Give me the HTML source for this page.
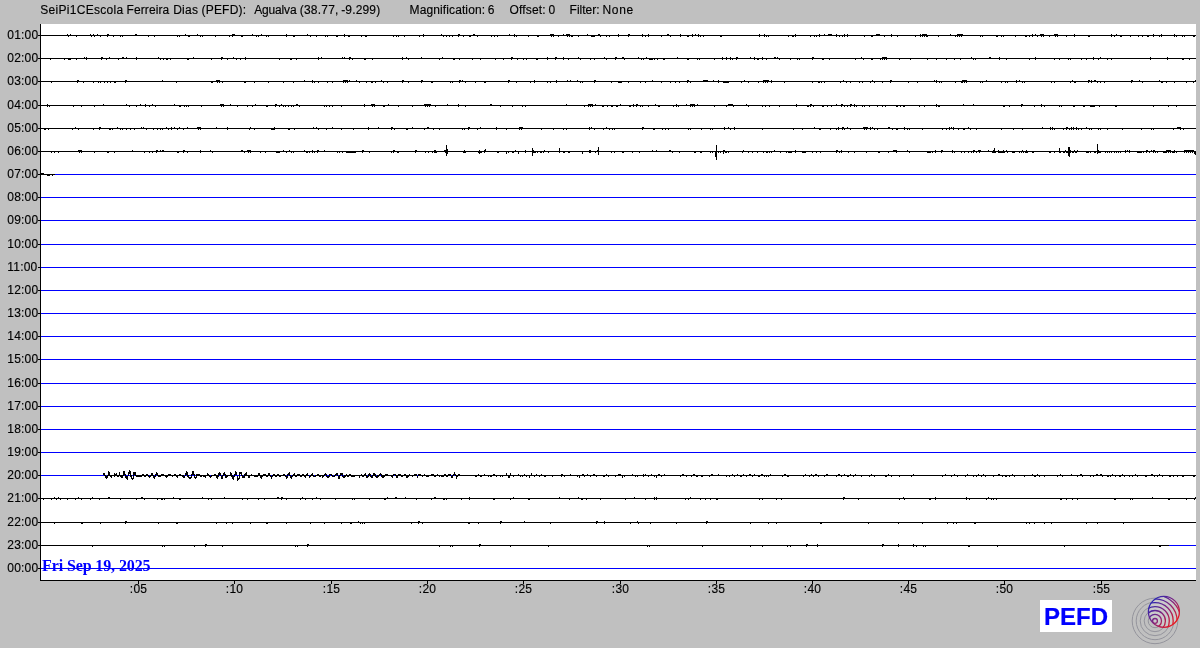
<!DOCTYPE html>
<html lang="en"><head><meta charset="utf-8"><title>SeiPi1C Escola Ferreira Dias (PEFD) helicorder</title>
<style>
html,body{margin:0;padding:0;background:#c0c0c0;}
body{width:1200px;height:648px;overflow:hidden;position:relative;font-family:"Liberation Sans",sans-serif;}
svg{position:absolute;left:0;top:0;display:block;}
text{font-family:"Liberation Sans",sans-serif;font-size:12px;fill:#000;stroke:#000;stroke-width:0.15px;}
text.date{font-family:"Liberation Serif",serif;font-weight:bold;font-size:16px;fill:#0000ff;stroke:none;}
text.sta{font-weight:bold;font-size:24px;fill:#0000ff;stroke:#0000ff;stroke-width:0.2px;}
</style></head><body>
<svg width="1200" height="648" viewBox="0 0 1200 648">
<rect x="0" y="0" width="1200" height="648" fill="#c0c0c0"/>
<rect x="40" y="24" width="1156" height="557" fill="#ffffff"/>
<g shape-rendering="crispEdges">
<rect x="40" y="35" width="1156" height="1" fill="#000000"/>
<rect x="38" y="35" width="2" height="1" fill="#000000"/>
<rect x="40" y="58" width="1156" height="1" fill="#000000"/>
<rect x="38" y="58" width="2" height="1" fill="#000000"/>
<rect x="40" y="81" width="1156" height="1" fill="#000000"/>
<rect x="38" y="81" width="2" height="1" fill="#000000"/>
<rect x="40" y="105" width="1156" height="1" fill="#000000"/>
<rect x="38" y="105" width="2" height="1" fill="#000000"/>
<rect x="40" y="128" width="1156" height="1" fill="#000000"/>
<rect x="38" y="128" width="2" height="1" fill="#000000"/>
<rect x="40" y="151" width="1156" height="1" fill="#000000"/>
<rect x="38" y="151" width="2" height="1" fill="#000000"/>
<rect x="40" y="174" width="15" height="1" fill="#000000"/>
<rect x="55" y="174" width="1141" height="1" fill="#0000ff"/>
<rect x="38" y="174" width="2" height="1" fill="#000000"/>
<rect x="40" y="197" width="1156" height="1" fill="#0000ff"/>
<rect x="38" y="197" width="2" height="1" fill="#000000"/>
<rect x="40" y="220" width="1156" height="1" fill="#0000ff"/>
<rect x="38" y="220" width="2" height="1" fill="#000000"/>
<rect x="40" y="244" width="1156" height="1" fill="#0000ff"/>
<rect x="38" y="244" width="2" height="1" fill="#000000"/>
<rect x="40" y="267" width="1156" height="1" fill="#0000ff"/>
<rect x="38" y="267" width="2" height="1" fill="#000000"/>
<rect x="40" y="290" width="1156" height="1" fill="#0000ff"/>
<rect x="38" y="290" width="2" height="1" fill="#000000"/>
<rect x="40" y="313" width="1156" height="1" fill="#0000ff"/>
<rect x="38" y="313" width="2" height="1" fill="#000000"/>
<rect x="40" y="336" width="1156" height="1" fill="#0000ff"/>
<rect x="38" y="336" width="2" height="1" fill="#000000"/>
<rect x="40" y="359" width="1156" height="1" fill="#0000ff"/>
<rect x="38" y="359" width="2" height="1" fill="#000000"/>
<rect x="40" y="383" width="1156" height="1" fill="#0000ff"/>
<rect x="38" y="383" width="2" height="1" fill="#000000"/>
<rect x="40" y="406" width="1156" height="1" fill="#0000ff"/>
<rect x="38" y="406" width="2" height="1" fill="#000000"/>
<rect x="40" y="429" width="1156" height="1" fill="#0000ff"/>
<rect x="38" y="429" width="2" height="1" fill="#000000"/>
<rect x="40" y="452" width="1156" height="1" fill="#0000ff"/>
<rect x="38" y="452" width="2" height="1" fill="#000000"/>
<rect x="40" y="475" width="420" height="1" fill="#0000ff"/>
<rect x="460" y="475" width="736" height="1" fill="#000000"/>
<rect x="38" y="475" width="2" height="1" fill="#000000"/>
<rect x="40" y="498" width="1156" height="1" fill="#000000"/>
<rect x="38" y="498" width="2" height="1" fill="#000000"/>
<rect x="40" y="522" width="1156" height="1" fill="#000000"/>
<rect x="38" y="522" width="2" height="1" fill="#000000"/>
<rect x="40" y="545" width="1129" height="1" fill="#000000"/>
<rect x="1169" y="545" width="27" height="1" fill="#0000ff"/>
<rect x="38" y="545" width="2" height="1" fill="#000000"/>
<rect x="40" y="568" width="1156" height="1" fill="#0000ff"/>
<rect x="38" y="568" width="2" height="1" fill="#000000"/>
<rect x="40" y="24" width="1" height="557" fill="#000"/>
<rect x="40" y="580" width="1156" height="1" fill="#000"/>
<rect x="138" y="580" width="1" height="4" fill="#000"/>
<rect x="234" y="580" width="1" height="4" fill="#000"/>
<rect x="331" y="580" width="1" height="4" fill="#000"/>
<rect x="427" y="580" width="1" height="4" fill="#000"/>
<rect x="523" y="580" width="1" height="4" fill="#000"/>
<rect x="620" y="580" width="1" height="4" fill="#000"/>
<rect x="716" y="580" width="1" height="4" fill="#000"/>
<rect x="812" y="580" width="1" height="4" fill="#000"/>
<rect x="908" y="580" width="1" height="4" fill="#000"/>
<rect x="1004" y="580" width="1" height="4" fill="#000"/>
<rect x="1101" y="580" width="1" height="4" fill="#000"/>
</g>
<path shape-rendering="crispEdges" fill="#000" d="M67 34h1v1h-1zM70 34h1v1h-1zM90 34h1v1h-1zM93 34h1v1h-1zM97 34h1v1h-1zM107 34h2v1h-2zM135 34h2v1h-2zM185 34h1v1h-1zM197 34h1v1h-1zM232 34h3v1h-3zM252 34h1v1h-1zM261 34h1v1h-1zM286 34h1v1h-1zM307 34h1v1h-1zM344 34h1v1h-1zM423 34h1v1h-1zM441 34h1v1h-1zM458 34h2v1h-2zM473 34h2v1h-2zM509 34h1v1h-1zM514 34h1v1h-1zM550 34h4v1h-4zM563 34h1v1h-1zM566 34h4v1h-4zM587 34h1v1h-1zM598 34h2v1h-2zM618 34h1v1h-1zM628 34h2v1h-2zM642 34h1v1h-1zM648 34h1v1h-1zM667 34h2v1h-2zM680 34h1v1h-1zM692 34h1v1h-1zM695 34h1v1h-1zM698 34h1v1h-1zM759 34h1v1h-1zM764 34h1v1h-1zM795 34h1v1h-1zM819 34h1v1h-1zM824 34h1v1h-1zM828 34h4v1h-4zM836 34h1v1h-1zM844 34h1v1h-1zM847 34h1v1h-1zM876 34h4v1h-4zM891 34h1v1h-1zM920 34h1v1h-1zM922 34h5v1h-5zM950 34h1v1h-1zM957 34h6v1h-6zM1032 34h1v1h-1zM1035 34h1v1h-1zM1040 34h4v1h-4zM1054 34h4v1h-4zM1074 34h1v1h-1zM1111 34h1v1h-1zM1116 34h1v1h-1zM1153 34h1v1h-1zM1161 34h1v1h-1zM1174 34h1v1h-1zM68 36h1v1h-1zM76 36h1v1h-1zM91 36h1v1h-1zM94 36h1v1h-1zM100 36h1v1h-1zM107 36h1v1h-1zM113 36h1v1h-1zM120 36h1v1h-1zM122 36h1v1h-1zM148 36h1v1h-1zM154 36h1v1h-1zM177 36h1v1h-1zM179 36h1v1h-1zM188 36h2v1h-2zM200 36h1v1h-1zM202 36h1v1h-1zM215 36h1v1h-1zM229 36h1v1h-1zM232 36h1v1h-1zM241 36h2v1h-2zM256 36h1v1h-1zM258 36h1v1h-1zM266 36h1v1h-1zM268 36h1v1h-1zM286 36h1v1h-1zM293 36h2v1h-2zM310 36h1v1h-1zM316 36h1v1h-1zM325 36h1v1h-1zM327 36h1v1h-1zM336 36h2v1h-2zM344 36h1v1h-1zM348 36h2v1h-2zM361 36h1v1h-1zM365 36h2v1h-2zM393 36h1v1h-1zM396 36h1v1h-1zM398 36h1v1h-1zM404 36h1v1h-1zM419 36h1v1h-1zM423 36h1v1h-1zM443 36h1v1h-1zM446 36h1v1h-1zM449 36h1v1h-1zM452 36h1v1h-1zM458 36h1v1h-1zM463 36h1v1h-1zM469 36h2v1h-2zM477 36h1v1h-1zM491 36h1v1h-1zM494 36h1v1h-1zM497 36h1v1h-1zM514 36h1v1h-1zM516 36h1v1h-1zM528 36h1v1h-1zM537 36h2v1h-2zM551 36h1v1h-1zM553 36h1v1h-1zM558 36h1v1h-1zM567 36h1v1h-1zM569 36h1v1h-1zM571 36h2v1h-2zM578 36h1v1h-1zM591 36h4v1h-4zM600 36h1v1h-1zM606 36h1v1h-1zM609 36h1v1h-1zM618 36h1v1h-1zM628 36h1v1h-1zM642 36h1v1h-1zM645 36h1v1h-1zM648 36h1v1h-1zM661 36h1v1h-1zM670 36h1v1h-1zM680 36h1v1h-1zM687 36h2v1h-2zM692 36h1v1h-1zM698 36h1v1h-1zM700 36h1v1h-1zM703 36h1v1h-1zM720 36h2v1h-2zM759 36h1v1h-1zM764 36h1v1h-1zM766 36h1v1h-1zM768 36h1v1h-1zM788 36h1v1h-1zM792 36h2v1h-2zM795 36h1v1h-1zM810 36h1v1h-1zM814 36h1v1h-1zM816 36h1v1h-1zM819 36h1v1h-1zM836 36h1v1h-1zM839 36h1v1h-1zM842 36h1v1h-1zM844 36h1v1h-1zM847 36h1v1h-1zM864 36h1v1h-1zM871 36h2v1h-2zM884 36h1v1h-1zM891 36h1v1h-1zM897 36h1v1h-1zM915 36h1v1h-1zM920 36h1v1h-1zM922 36h1v1h-1zM924 36h1v1h-1zM926 36h2v1h-2zM938 36h1v1h-1zM955 36h1v1h-1zM957 36h1v1h-1zM959 36h1v1h-1zM961 36h1v1h-1zM980 36h1v1h-1zM982 36h1v1h-1zM996 36h2v1h-2zM1001 36h1v1h-1zM1003 36h1v1h-1zM1015 36h1v1h-1zM1025 36h2v1h-2zM1029 36h1v1h-1zM1032 36h1v1h-1zM1037 36h1v1h-1zM1041 36h1v1h-1zM1043 36h1v1h-1zM1049 36h1v1h-1zM1055 36h1v1h-1zM1057 36h1v1h-1zM1066 36h1v1h-1zM1074 36h1v1h-1zM1088 36h2v1h-2zM1111 36h1v1h-1zM1114 36h1v1h-1zM1120 36h2v1h-2zM1130 36h1v1h-1zM1138 36h1v1h-1zM1142 36h1v1h-1zM1147 36h2v1h-2zM1153 36h1v1h-1zM1159 36h1v1h-1zM1161 36h1v1h-1zM1174 36h1v1h-1zM1176 36h1v1h-1zM1182 36h1v1h-1zM1184 36h1v1h-1zM1193 36h2v1h-2zM84 57h1v1h-1zM86 57h1v1h-1zM101 57h2v1h-2zM109 57h1v1h-1zM122 57h2v1h-2zM126 57h1v1h-1zM136 57h1v1h-1zM158 57h1v1h-1zM193 57h1v1h-1zM221 57h2v1h-2zM233 57h1v1h-1zM245 57h1v1h-1zM318 57h1v1h-1zM321 57h1v1h-1zM342 57h1v1h-1zM344 57h1v1h-1zM349 57h2v1h-2zM402 57h1v1h-1zM406 57h1v1h-1zM421 57h1v1h-1zM442 57h1v1h-1zM511 57h2v1h-2zM547 57h1v1h-1zM555 57h2v1h-2zM563 57h1v1h-1zM578 57h1v1h-1zM604 57h1v1h-1zM615 57h2v1h-2zM622 57h2v1h-2zM638 57h1v1h-1zM646 57h1v1h-1zM677 57h1v1h-1zM722 57h1v1h-1zM726 57h1v1h-1zM730 57h1v1h-1zM736 57h2v1h-2zM750 57h1v1h-1zM754 57h1v1h-1zM762 57h1v1h-1zM774 57h2v1h-2zM777 57h1v1h-1zM812 57h2v1h-2zM861 57h1v1h-1zM882 57h5v1h-5zM971 57h1v1h-1zM989 57h2v1h-2zM999 57h1v1h-1zM1035 57h1v1h-1zM1093 57h1v1h-1zM1100 57h1v1h-1zM1150 57h1v1h-1zM1167 57h1v1h-1zM50 59h1v1h-1zM64 59h1v1h-1zM68 59h3v1h-3zM76 59h1v1h-1zM86 59h1v1h-1zM101 59h1v1h-1zM106 59h1v1h-1zM118 59h1v1h-1zM136 59h1v1h-1zM160 59h1v1h-1zM163 59h1v1h-1zM166 59h2v1h-2zM170 59h1v1h-1zM187 59h2v1h-2zM211 59h1v1h-1zM221 59h1v1h-1zM227 59h1v1h-1zM236 59h1v1h-1zM240 59h1v1h-1zM245 59h1v1h-1zM279 59h1v1h-1zM290 59h2v1h-2zM296 59h1v1h-1zM318 59h1v1h-1zM349 59h1v1h-1zM352 59h1v1h-1zM364 59h2v1h-2zM372 59h1v1h-1zM402 59h1v1h-1zM408 59h1v1h-1zM439 59h1v1h-1zM453 59h2v1h-2zM459 59h1v1h-1zM472 59h1v1h-1zM480 59h1v1h-1zM495 59h1v1h-1zM503 59h1v1h-1zM511 59h1v1h-1zM517 59h1v1h-1zM523 59h1v1h-1zM526 59h1v1h-1zM536 59h2v1h-2zM547 59h1v1h-1zM555 59h1v1h-1zM563 59h1v1h-1zM568 59h1v1h-1zM580 59h1v1h-1zM590 59h1v1h-1zM594 59h1v1h-1zM606 59h1v1h-1zM615 59h1v1h-1zM624 59h1v1h-1zM641 59h1v1h-1zM643 59h1v1h-1zM649 59h4v1h-4zM654 59h1v1h-1zM657 59h1v1h-1zM663 59h2v1h-2zM687 59h2v1h-2zM697 59h1v1h-1zM699 59h1v1h-1zM714 59h1v1h-1zM722 59h1v1h-1zM726 59h1v1h-1zM730 59h1v1h-1zM732 59h1v1h-1zM736 59h1v1h-1zM754 59h1v1h-1zM757 59h2v1h-2zM762 59h1v1h-1zM766 59h1v1h-1zM779 59h1v1h-1zM790 59h1v1h-1zM797 59h1v1h-1zM799 59h1v1h-1zM812 59h1v1h-1zM822 59h2v1h-2zM829 59h1v1h-1zM855 59h1v1h-1zM863 59h1v1h-1zM871 59h2v1h-2zM880 59h1v1h-1zM882 59h1v1h-1zM884 59h1v1h-1zM886 59h1v1h-1zM899 59h1v1h-1zM910 59h1v1h-1zM927 59h1v1h-1zM936 59h1v1h-1zM946 59h1v1h-1zM954 59h1v1h-1zM960 59h1v1h-1zM973 59h1v1h-1zM975 59h1v1h-1zM999 59h1v1h-1zM1006 59h1v1h-1zM1029 59h1v1h-1zM1035 59h1v1h-1zM1054 59h1v1h-1zM1059 59h1v1h-1zM1068 59h1v1h-1zM1070 59h1v1h-1zM1081 59h1v1h-1zM1086 59h1v1h-1zM1093 59h1v1h-1zM1098 59h1v1h-1zM1107 59h1v1h-1zM1111 59h1v1h-1zM1150 59h1v1h-1zM1167 59h1v1h-1zM1182 59h2v1h-2zM1189 59h1v1h-1zM77 80h2v1h-2zM125 80h2v1h-2zM162 80h1v1h-1zM216 80h4v1h-4zM304 80h1v1h-1zM312 80h1v1h-1zM343 80h5v1h-5zM349 80h1v1h-1zM356 80h1v1h-1zM381 80h1v1h-1zM402 80h2v1h-2zM421 80h2v1h-2zM459 80h2v1h-2zM462 80h1v1h-1zM508 80h2v1h-2zM534 80h1v1h-1zM556 80h1v1h-1zM567 80h1v1h-1zM570 80h1v1h-1zM577 80h1v1h-1zM594 80h2v1h-2zM652 80h1v1h-1zM687 80h2v1h-2zM703 80h5v1h-5zM713 80h1v1h-1zM718 80h1v1h-1zM744 80h1v1h-1zM763 80h6v1h-6zM771 80h1v1h-1zM843 80h1v1h-1zM872 80h1v1h-1zM890 80h2v1h-2zM934 80h1v1h-1zM936 80h1v1h-1zM962 80h5v1h-5zM986 80h1v1h-1zM1016 80h1v1h-1zM1019 80h1v1h-1zM1072 80h1v1h-1zM1088 80h2v1h-2zM1091 80h1v1h-1zM1094 80h2v1h-2zM1131 80h2v1h-2zM1139 80h1v1h-1zM1159 80h1v1h-1zM1195 80h1v1h-1zM51 82h1v1h-1zM77 82h1v1h-1zM83 82h1v1h-1zM93 82h1v1h-1zM98 82h1v1h-1zM100 82h1v1h-1zM104 82h1v1h-1zM107 82h1v1h-1zM110 82h1v1h-1zM114 82h2v1h-2zM125 82h1v1h-1zM176 82h1v1h-1zM211 82h2v1h-2zM217 82h1v1h-1zM219 82h1v1h-1zM222 82h1v1h-1zM244 82h2v1h-2zM254 82h1v1h-1zM268 82h1v1h-1zM283 82h1v1h-1zM293 82h1v1h-1zM312 82h1v1h-1zM314 82h1v1h-1zM318 82h1v1h-1zM327 82h1v1h-1zM332 82h1v1h-1zM343 82h1v1h-1zM345 82h1v1h-1zM347 82h1v1h-1zM359 82h1v1h-1zM366 82h1v1h-1zM371 82h2v1h-2zM375 82h1v1h-1zM383 82h1v1h-1zM387 82h1v1h-1zM402 82h1v1h-1zM408 82h1v1h-1zM421 82h1v1h-1zM431 82h2v1h-2zM450 82h1v1h-1zM452 82h1v1h-1zM459 82h1v1h-1zM465 82h1v1h-1zM475 82h1v1h-1zM484 82h2v1h-2zM508 82h1v1h-1zM516 82h1v1h-1zM530 82h1v1h-1zM534 82h1v1h-1zM547 82h1v1h-1zM550 82h1v1h-1zM556 82h1v1h-1zM580 82h1v1h-1zM582 82h1v1h-1zM594 82h1v1h-1zM611 82h1v1h-1zM618 82h4v1h-4zM628 82h1v1h-1zM640 82h1v1h-1zM645 82h1v1h-1zM661 82h1v1h-1zM670 82h1v1h-1zM675 82h1v1h-1zM679 82h1v1h-1zM687 82h1v1h-1zM690 82h1v1h-1zM718 82h1v1h-1zM723 82h6v1h-6zM741 82h1v1h-1zM748 82h1v1h-1zM758 82h1v1h-1zM763 82h1v1h-1zM765 82h1v1h-1zM767 82h1v1h-1zM771 82h1v1h-1zM784 82h1v1h-1zM812 82h1v1h-1zM818 82h2v1h-2zM821 82h1v1h-1zM824 82h1v1h-1zM840 82h1v1h-1zM846 82h1v1h-1zM850 82h1v1h-1zM859 82h1v1h-1zM862 82h1v1h-1zM870 82h1v1h-1zM874 82h1v1h-1zM882 82h1v1h-1zM890 82h1v1h-1zM908 82h1v1h-1zM917 82h1v1h-1zM936 82h1v1h-1zM939 82h1v1h-1zM941 82h1v1h-1zM955 82h1v1h-1zM961 82h2v1h-2zM964 82h1v1h-1zM966 82h1v1h-1zM980 82h1v1h-1zM982 82h1v1h-1zM1001 82h1v1h-1zM1005 82h1v1h-1zM1007 82h1v1h-1zM1016 82h1v1h-1zM1022 82h1v1h-1zM1024 82h1v1h-1zM1051 82h1v1h-1zM1054 82h1v1h-1zM1070 82h1v1h-1zM1074 82h2v1h-2zM1088 82h1v1h-1zM1091 82h1v1h-1zM1097 82h1v1h-1zM1100 82h1v1h-1zM1104 82h1v1h-1zM1131 82h1v1h-1zM1142 82h1v1h-1zM1161 82h2v1h-2zM1166 82h1v1h-1zM1174 82h1v1h-1zM1186 82h1v1h-1zM1193 82h1v1h-1zM47 104h1v1h-1zM103 104h1v1h-1zM126 104h1v1h-1zM140 104h1v1h-1zM145 104h1v1h-1zM152 104h1v1h-1zM174 104h1v1h-1zM220 104h4v1h-4zM230 104h1v1h-1zM255 104h1v1h-1zM275 104h2v1h-2zM281 104h1v1h-1zM296 104h2v1h-2zM364 104h1v1h-1zM371 104h4v1h-4zM388 104h1v1h-1zM424 104h7v1h-7zM447 104h1v1h-1zM458 104h1v1h-1zM490 104h2v1h-2zM566 104h1v1h-1zM588 104h5v1h-5zM595 104h1v1h-1zM620 104h1v1h-1zM633 104h1v1h-1zM636 104h2v1h-2zM655 104h1v1h-1zM676 104h1v1h-1zM686 104h1v1h-1zM690 104h5v1h-5zM697 104h1v1h-1zM728 104h5v1h-5zM746 104h1v1h-1zM796 104h1v1h-1zM810 104h2v1h-2zM836 104h1v1h-1zM841 104h2v1h-2zM850 104h2v1h-2zM854 104h1v1h-1zM936 104h1v1h-1zM963 104h1v1h-1zM973 104h1v1h-1zM1021 104h2v1h-2zM1041 104h1v1h-1zM47 106h1v1h-1zM49 106h1v1h-1zM73 106h1v1h-1zM81 106h1v1h-1zM94 106h1v1h-1zM129 106h1v1h-1zM136 106h1v1h-1zM145 106h1v1h-1zM149 106h1v1h-1zM155 106h1v1h-1zM179 106h2v1h-2zM184 106h1v1h-1zM186 106h1v1h-1zM188 106h1v1h-1zM201 106h1v1h-1zM221 106h1v1h-1zM223 106h1v1h-1zM237 106h1v1h-1zM247 106h1v1h-1zM252 106h1v1h-1zM266 106h2v1h-2zM275 106h1v1h-1zM279 106h1v1h-1zM283 106h1v1h-1zM285 106h1v1h-1zM288 106h1v1h-1zM291 106h1v1h-1zM293 106h1v1h-1zM299 106h1v1h-1zM324 106h1v1h-1zM326 106h1v1h-1zM329 106h1v1h-1zM332 106h1v1h-1zM341 106h1v1h-1zM364 106h1v1h-1zM372 106h1v1h-1zM374 106h1v1h-1zM383 106h2v1h-2zM398 106h1v1h-1zM412 106h1v1h-1zM425 106h1v1h-1zM427 106h1v1h-1zM429 106h1v1h-1zM435 106h1v1h-1zM458 106h1v1h-1zM465 106h1v1h-1zM500 106h1v1h-1zM512 106h1v1h-1zM522 106h1v1h-1zM525 106h1v1h-1zM584 106h1v1h-1zM588 106h1v1h-1zM590 106h1v1h-1zM592 106h1v1h-1zM602 106h2v1h-2zM607 106h1v1h-1zM611 106h2v1h-2zM616 106h2v1h-2zM629 106h2v1h-2zM633 106h1v1h-1zM636 106h1v1h-1zM640 106h1v1h-1zM642 106h1v1h-1zM648 106h1v1h-1zM658 106h2v1h-2zM673 106h1v1h-1zM676 106h1v1h-1zM678 106h1v1h-1zM690 106h1v1h-1zM692 106h1v1h-1zM694 106h1v1h-1zM714 106h1v1h-1zM726 106h1v1h-1zM733 106h1v1h-1zM748 106h1v1h-1zM762 106h1v1h-1zM765 106h1v1h-1zM769 106h1v1h-1zM779 106h1v1h-1zM796 106h1v1h-1zM807 106h2v1h-2zM810 106h1v1h-1zM813 106h1v1h-1zM822 106h2v1h-2zM827 106h1v1h-1zM831 106h1v1h-1zM841 106h1v1h-1zM844 106h1v1h-1zM847 106h1v1h-1zM850 106h1v1h-1zM854 106h1v1h-1zM856 106h1v1h-1zM862 106h1v1h-1zM864 106h1v1h-1zM869 106h1v1h-1zM877 106h1v1h-1zM882 106h1v1h-1zM885 106h1v1h-1zM896 106h2v1h-2zM900 106h1v1h-1zM903 106h2v1h-2zM919 106h1v1h-1zM924 106h1v1h-1zM936 106h1v1h-1zM938 106h2v1h-2zM1003 106h2v1h-2zM1009 106h1v1h-1zM1021 106h1v1h-1zM1034 106h1v1h-1zM1041 106h1v1h-1zM1044 106h1v1h-1zM1059 106h1v1h-1zM1061 106h1v1h-1zM1073 106h2v1h-2zM1083 106h2v1h-2zM1090 106h5v1h-5zM1099 106h1v1h-1zM1115 106h2v1h-2zM1153 106h1v1h-1zM1168 106h1v1h-1zM1176 106h1v1h-1zM75 127h1v1h-1zM99 127h2v1h-2zM117 127h1v1h-1zM141 127h1v1h-1zM143 127h1v1h-1zM166 127h1v1h-1zM171 127h1v1h-1zM174 127h1v1h-1zM179 127h1v1h-1zM187 127h1v1h-1zM197 127h4v1h-4zM216 127h1v1h-1zM227 127h1v1h-1zM250 127h1v1h-1zM274 127h1v1h-1zM313 127h1v1h-1zM316 127h1v1h-1zM332 127h1v1h-1zM368 127h1v1h-1zM378 127h1v1h-1zM391 127h2v1h-2zM412 127h1v1h-1zM427 127h2v1h-2zM468 127h2v1h-2zM480 127h1v1h-1zM496 127h1v1h-1zM519 127h4v1h-4zM589 127h1v1h-1zM591 127h1v1h-1zM606 127h1v1h-1zM642 127h2v1h-2zM724 127h1v1h-1zM728 127h1v1h-1zM734 127h1v1h-1zM814 127h1v1h-1zM838 127h1v1h-1zM842 127h2v1h-2zM847 127h1v1h-1zM863 127h5v1h-5zM870 127h1v1h-1zM872 127h1v1h-1zM888 127h2v1h-2zM904 127h1v1h-1zM949 127h1v1h-1zM951 127h1v1h-1zM953 127h1v1h-1zM968 127h1v1h-1zM1042 127h1v1h-1zM1050 127h1v1h-1zM1052 127h1v1h-1zM1066 127h2v1h-2zM1071 127h1v1h-1zM1073 127h1v1h-1zM1076 127h1v1h-1zM1086 127h1v1h-1zM1177 127h4v1h-4zM44 129h2v1h-2zM48 129h1v1h-1zM72 129h1v1h-1zM78 129h1v1h-1zM93 129h1v1h-1zM99 129h1v1h-1zM109 129h2v1h-2zM112 129h1v1h-1zM120 129h1v1h-1zM122 129h1v1h-1zM126 129h1v1h-1zM130 129h1v1h-1zM134 129h1v1h-1zM146 129h1v1h-1zM153 129h1v1h-1zM157 129h1v1h-1zM160 129h1v1h-1zM162 129h1v1h-1zM168 129h1v1h-1zM171 129h1v1h-1zM177 129h1v1h-1zM183 129h1v1h-1zM198 129h1v1h-1zM200 129h1v1h-1zM227 129h1v1h-1zM249 129h1v1h-1zM254 129h1v1h-1zM271 129h4v1h-4zM288 129h2v1h-2zM294 129h1v1h-1zM318 129h1v1h-1zM326 129h1v1h-1zM341 129h1v1h-1zM353 129h1v1h-1zM368 129h1v1h-1zM391 129h1v1h-1zM394 129h1v1h-1zM406 129h2v1h-2zM424 129h1v1h-1zM433 129h1v1h-1zM439 129h1v1h-1zM462 129h1v1h-1zM464 129h1v1h-1zM468 129h1v1h-1zM477 129h1v1h-1zM496 129h1v1h-1zM506 129h1v1h-1zM519 129h1v1h-1zM521 129h1v1h-1zM541 129h1v1h-1zM553 129h1v1h-1zM563 129h1v1h-1zM566 129h1v1h-1zM589 129h1v1h-1zM594 129h1v1h-1zM603 129h1v1h-1zM609 129h1v1h-1zM612 129h1v1h-1zM614 129h1v1h-1zM642 129h1v1h-1zM653 129h2v1h-2zM662 129h1v1h-1zM665 129h1v1h-1zM668 129h1v1h-1zM688 129h1v1h-1zM690 129h1v1h-1zM701 129h1v1h-1zM710 129h1v1h-1zM712 129h1v1h-1zM724 129h1v1h-1zM730 129h1v1h-1zM734 129h1v1h-1zM762 129h1v1h-1zM793 129h1v1h-1zM802 129h1v1h-1zM819 129h2v1h-2zM830 129h1v1h-1zM836 129h1v1h-1zM838 129h1v1h-1zM842 129h1v1h-1zM844 129h1v1h-1zM850 129h1v1h-1zM864 129h1v1h-1zM866 129h1v1h-1zM870 129h1v1h-1zM874 129h1v1h-1zM877 129h1v1h-1zM892 129h1v1h-1zM896 129h2v1h-2zM904 129h1v1h-1zM907 129h1v1h-1zM909 129h1v1h-1zM922 129h1v1h-1zM942 129h1v1h-1zM946 129h1v1h-1zM949 129h1v1h-1zM953 129h1v1h-1zM958 129h1v1h-1zM963 129h2v1h-2zM970 129h1v1h-1zM976 129h1v1h-1zM1001 129h1v1h-1zM1013 129h1v1h-1zM1022 129h1v1h-1zM1050 129h1v1h-1zM1052 129h1v1h-1zM1054 129h1v1h-1zM1063 129h1v1h-1zM1066 129h1v1h-1zM1069 129h1v1h-1zM1071 129h1v1h-1zM1073 129h1v1h-1zM1076 129h1v1h-1zM1078 129h1v1h-1zM1081 129h1v1h-1zM1089 129h1v1h-1zM1091 129h1v1h-1zM1098 129h1v1h-1zM1100 129h1v1h-1zM1107 129h1v1h-1zM1122 129h1v1h-1zM1141 129h1v1h-1zM1151 129h1v1h-1zM1153 129h1v1h-1zM1173 129h1v1h-1zM1180 129h1v1h-1zM1183 129h1v1h-1zM1097 144h1v1h-1zM446 145h1v1h-1zM716 145h1v1h-1zM1097 145h1v1h-1zM446 146h1v1h-1zM716 146h1v1h-1zM1097 146h1v1h-1zM446 147h1v1h-1zM598 147h1v1h-1zM716 147h1v1h-1zM1068 147h2v1h-2zM1097 147h1v1h-1zM446 148h1v1h-1zM532 148h1v1h-1zM559 148h1v1h-1zM598 148h1v1h-1zM716 148h1v1h-1zM994 148h1v1h-1zM1059 148h1v1h-1zM1068 148h2v1h-2zM1097 148h1v1h-1zM446 149h2v1h-2zM485 149h1v1h-1zM532 149h1v1h-1zM559 149h1v1h-1zM598 149h1v1h-1zM716 149h1v1h-1zM994 149h1v1h-1zM1059 149h1v1h-1zM1068 149h2v1h-2zM1097 149h1v1h-1zM78 150h4v1h-4zM132 150h1v1h-1zM156 150h2v1h-2zM160 150h1v1h-1zM162 150h2v1h-2zM183 150h2v1h-2zM200 150h1v1h-1zM210 150h1v1h-1zM241 150h2v1h-2zM247 150h4v1h-4zM283 150h1v1h-1zM289 150h1v1h-1zM304 150h1v1h-1zM312 150h1v1h-1zM317 150h2v1h-2zM324 150h1v1h-1zM362 150h2v1h-2zM393 150h2v1h-2zM415 150h2v1h-2zM434 150h2v1h-2zM444 150h4v1h-4zM464 150h1v1h-1zM479 150h1v1h-1zM484 150h2v1h-2zM515 150h1v1h-1zM525 150h1v1h-1zM532 150h2v1h-2zM544 150h1v1h-1zM559 150h1v1h-1zM589 150h2v1h-2zM597 150h2v1h-2zM652 150h1v1h-1zM656 150h1v1h-1zM669 150h2v1h-2zM716 150h1v1h-1zM723 150h2v1h-2zM743 150h1v1h-1zM774 150h1v1h-1zM795 150h1v1h-1zM836 150h2v1h-2zM841 150h1v1h-1zM893 150h4v1h-4zM907 150h1v1h-1zM935 150h1v1h-1zM941 150h2v1h-2zM952 150h1v1h-1zM973 150h2v1h-2zM978 150h3v1h-3zM988 150h1v1h-1zM993 150h2v1h-2zM998 150h1v1h-1zM1003 150h1v1h-1zM1006 150h1v1h-1zM1022 150h1v1h-1zM1026 150h1v1h-1zM1059 150h1v1h-1zM1065 150h1v1h-1zM1068 150h3v1h-3zM1074 150h1v1h-1zM1077 150h1v1h-1zM1097 150h2v1h-2zM1125 150h1v1h-1zM1127 150h1v1h-1zM1129 150h1v1h-1zM1146 150h2v1h-2zM1151 150h1v1h-1zM1153 150h2v1h-2zM1166 150h5v1h-5zM1174 150h1v1h-1zM1184 150h10v1h-10zM51 152h1v1h-1zM54 152h1v1h-1zM58 152h1v1h-1zM79 152h1v1h-1zM81 152h1v1h-1zM94 152h1v1h-1zM107 152h2v1h-2zM114 152h1v1h-1zM144 152h1v1h-1zM149 152h1v1h-1zM152 152h1v1h-1zM156 152h1v1h-1zM177 152h2v1h-2zM183 152h1v1h-1zM187 152h1v1h-1zM200 152h1v1h-1zM212 152h1v1h-1zM244 152h1v1h-1zM248 152h1v1h-1zM250 152h1v1h-1zM260 152h1v1h-1zM265 152h1v1h-1zM276 152h4v1h-4zM286 152h1v1h-1zM291 152h1v1h-1zM293 152h1v1h-1zM306 152h2v1h-2zM309 152h1v1h-1zM312 152h1v1h-1zM314 152h1v1h-1zM317 152h1v1h-1zM337 152h1v1h-1zM339 152h1v1h-1zM342 152h1v1h-1zM346 152h10v1h-10zM362 152h1v1h-1zM369 152h1v1h-1zM391 152h1v1h-1zM393 152h1v1h-1zM397 152h2v1h-2zM415 152h1v1h-1zM425 152h1v1h-1zM428 152h1v1h-1zM432 152h1v1h-1zM434 152h3v1h-3zM445 152h3v1h-3zM463 152h3v1h-3zM478 152h4v1h-4zM484 152h1v1h-1zM497 152h2v1h-2zM506 152h1v1h-1zM508 152h1v1h-1zM512 152h2v1h-2zM518 152h1v1h-1zM525 152h1v1h-1zM532 152h4v1h-4zM537 152h1v1h-1zM540 152h2v1h-2zM543 152h1v1h-1zM548 152h1v1h-1zM559 152h1v1h-1zM563 152h2v1h-2zM568 152h2v1h-2zM582 152h1v1h-1zM589 152h2v1h-2zM595 152h1v1h-1zM598 152h1v1h-1zM611 152h1v1h-1zM614 152h1v1h-1zM622 152h2v1h-2zM632 152h1v1h-1zM639 152h1v1h-1zM672 152h1v1h-1zM679 152h1v1h-1zM694 152h2v1h-2zM700 152h2v1h-2zM710 152h1v1h-1zM712 152h1v1h-1zM715 152h2v1h-2zM718 152h1v1h-1zM720 152h1v1h-1zM723 152h1v1h-1zM725 152h2v1h-2zM728 152h1v1h-1zM742 152h1v1h-1zM748 152h1v1h-1zM752 152h1v1h-1zM757 152h1v1h-1zM763 152h1v1h-1zM766 152h2v1h-2zM769 152h1v1h-1zM771 152h1v1h-1zM780 152h1v1h-1zM786 152h1v1h-1zM788 152h4v1h-4zM795 152h1v1h-1zM802 152h4v1h-4zM812 152h1v1h-1zM816 152h1v1h-1zM820 152h1v1h-1zM836 152h1v1h-1zM839 152h1v1h-1zM841 152h1v1h-1zM848 152h1v1h-1zM854 152h1v1h-1zM866 152h1v1h-1zM878 152h2v1h-2zM888 152h1v1h-1zM896 152h1v1h-1zM909 152h1v1h-1zM927 152h4v1h-4zM932 152h1v1h-1zM935 152h1v1h-1zM941 152h1v1h-1zM952 152h1v1h-1zM954 152h1v1h-1zM961 152h1v1h-1zM964 152h1v1h-1zM968 152h1v1h-1zM971 152h1v1h-1zM973 152h1v1h-1zM976 152h1v1h-1zM979 152h1v1h-1zM992 152h4v1h-4zM998 152h7v1h-7zM1007 152h1v1h-1zM1012 152h3v1h-3zM1019 152h1v1h-1zM1021 152h1v1h-1zM1023 152h1v1h-1zM1025 152h3v1h-3zM1032 152h2v1h-2zM1049 152h2v1h-2zM1054 152h1v1h-1zM1059 152h2v1h-2zM1063 152h2v1h-2zM1066 152h5v1h-5zM1072 152h2v1h-2zM1075 152h2v1h-2zM1086 152h3v1h-3zM1090 152h1v1h-1zM1094 152h2v1h-2zM1097 152h4v1h-4zM1105 152h1v1h-1zM1107 152h1v1h-1zM1109 152h1v1h-1zM1111 152h1v1h-1zM1114 152h1v1h-1zM1116 152h1v1h-1zM1118 152h1v1h-1zM1120 152h1v1h-1zM1125 152h1v1h-1zM1129 152h1v1h-1zM1137 152h5v1h-5zM1143 152h1v1h-1zM1146 152h1v1h-1zM1149 152h1v1h-1zM1153 152h1v1h-1zM1155 152h1v1h-1zM1157 152h1v1h-1zM1163 152h4v1h-4zM1168 152h1v1h-1zM1170 152h1v1h-1zM1172 152h3v1h-3zM1176 152h1v1h-1zM1184 152h1v1h-1zM1186 152h1v1h-1zM1188 152h1v1h-1zM1190 152h1v1h-1zM1192 152h1v1h-1zM1194 152h2v1h-2zM446 153h2v1h-2zM479 153h1v1h-1zM506 153h1v1h-1zM518 153h1v1h-1zM532 153h1v1h-1zM582 153h1v1h-1zM598 153h1v1h-1zM715 153h2v1h-2zM723 153h1v1h-1zM1068 153h2v1h-2zM1097 153h1v1h-1zM1194 153h2v1h-2zM446 154h1v1h-1zM532 154h1v1h-1zM598 154h1v1h-1zM715 154h2v1h-2zM1068 154h2v1h-2zM1195 154h1v1h-1zM446 155h1v1h-1zM532 155h1v1h-1zM715 155h2v1h-2zM1068 155h2v1h-2zM715 156h2v1h-2zM1069 156h1v1h-1zM716 157h1v1h-1zM716 158h1v1h-1zM716 159h1v1h-1zM41 173h3v1h-3zM47 175h3v1h-3zM52 175h1v1h-1zM129 470h1v1h-1zM108 471h1v1h-1zM123 471h2v1h-2zM129 471h2v1h-2zM186 471h1v1h-1zM192 471h2v1h-2zM235 471h1v1h-1zM108 472h2v1h-2zM119 472h1v1h-1zM123 472h2v1h-2zM128 472h3v1h-3zM133 472h3v1h-3zM156 472h1v1h-1zM186 472h2v1h-2zM192 472h2v1h-2zM219 472h1v1h-1zM224 472h1v1h-1zM230 472h1v1h-1zM235 472h2v1h-2zM239 472h3v1h-3zM246 472h1v1h-1zM289 472h1v1h-1zM454 472h1v1h-1zM103 473h2v1h-2zM108 473h2v1h-2zM114 473h1v1h-1zM116 473h1v1h-1zM119 473h1v1h-1zM123 473h2v1h-2zM128 473h3v1h-3zM133 473h3v1h-3zM151 473h2v1h-2zM156 473h2v1h-2zM185 473h3v1h-3zM192 473h2v1h-2zM207 473h1v1h-1zM218 473h3v1h-3zM223 473h2v1h-2zM230 473h2v1h-2zM235 473h2v1h-2zM239 473h3v1h-3zM245 473h2v1h-2zM258 473h2v1h-2zM268 473h2v1h-2zM288 473h2v1h-2zM294 473h1v1h-1zM307 473h1v1h-1zM312 473h1v1h-1zM325 473h1v1h-1zM336 473h2v1h-2zM340 473h3v1h-3zM365 473h1v1h-1zM369 473h1v1h-1zM373 473h2v1h-2zM380 473h1v1h-1zM454 473h1v1h-1zM506 473h1v1h-1zM510 473h1v1h-1zM531 473h1v1h-1zM103 474h2v1h-2zM108 474h2v1h-2zM114 474h3v1h-3zM119 474h1v1h-1zM123 474h3v1h-3zM128 474h1v1h-1zM130 474h1v1h-1zM133 474h3v1h-3zM142 474h2v1h-2zM146 474h2v1h-2zM151 474h2v1h-2zM155 474h3v1h-3zM161 474h3v1h-3zM168 474h3v1h-3zM174 474h2v1h-2zM179 474h2v1h-2zM185 474h3v1h-3zM191 474h4v1h-4zM196 474h4v1h-4zM207 474h2v1h-2zM214 474h2v1h-2zM218 474h3v1h-3zM223 474h3v1h-3zM230 474h2v1h-2zM234 474h3v1h-3zM239 474h1v1h-1zM241 474h1v1h-1zM244 474h3v1h-3zM251 474h1v1h-1zM258 474h2v1h-2zM263 474h3v1h-3zM268 474h2v1h-2zM273 474h2v1h-2zM277 474h2v1h-2zM283 474h2v1h-2zM287 474h3v1h-3zM293 474h2v1h-2zM297 474h3v1h-3zM302 474h2v1h-2zM306 474h2v1h-2zM311 474h2v1h-2zM317 474h2v1h-2zM324 474h3v1h-3zM329 474h3v1h-3zM335 474h3v1h-3zM340 474h3v1h-3zM346 474h1v1h-1zM349 474h2v1h-2zM361 474h1v1h-1zM364 474h2v1h-2zM368 474h3v1h-3zM373 474h3v1h-3zM379 474h3v1h-3zM385 474h3v1h-3zM393 474h3v1h-3zM398 474h3v1h-3zM404 474h2v1h-2zM409 474h1v1h-1zM414 474h3v1h-3zM418 474h3v1h-3zM424 474h1v1h-1zM431 474h3v1h-3zM437 474h1v1h-1zM444 474h2v1h-2zM448 474h3v1h-3zM453 474h3v1h-3zM458 474h2v1h-2zM478 474h1v1h-1zM484 474h1v1h-1zM493 474h2v1h-2zM506 474h1v1h-1zM510 474h1v1h-1zM518 474h1v1h-1zM524 474h1v1h-1zM531 474h1v1h-1zM536 474h1v1h-1zM541 474h1v1h-1zM561 474h2v1h-2zM570 474h1v1h-1zM582 474h2v1h-2zM587 474h1v1h-1zM593 474h2v1h-2zM606 474h1v1h-1zM618 474h3v1h-3zM632 474h1v1h-1zM643 474h1v1h-1zM645 474h1v1h-1zM651 474h1v1h-1zM658 474h2v1h-2zM664 474h1v1h-1zM682 474h2v1h-2zM693 474h2v1h-2zM711 474h2v1h-2zM718 474h1v1h-1zM732 474h1v1h-1zM737 474h1v1h-1zM743 474h1v1h-1zM749 474h2v1h-2zM754 474h1v1h-1zM761 474h2v1h-2zM770 474h1v1h-1zM784 474h2v1h-2zM805 474h1v1h-1zM811 474h1v1h-1zM815 474h2v1h-2zM826 474h2v1h-2zM838 474h2v1h-2zM844 474h1v1h-1zM850 474h1v1h-1zM855 474h1v1h-1zM871 474h1v1h-1zM888 474h1v1h-1zM913 474h1v1h-1zM945 474h1v1h-1zM954 474h1v1h-1zM967 474h1v1h-1zM978 474h1v1h-1zM983 474h1v1h-1zM998 474h2v1h-2zM1012 474h1v1h-1zM1032 474h1v1h-1zM1037 474h1v1h-1zM1060 474h1v1h-1zM1071 474h1v1h-1zM1080 474h2v1h-2zM1096 474h2v1h-2zM1100 474h2v1h-2zM1112 474h1v1h-1zM1122 474h1v1h-1zM1135 474h1v1h-1zM1151 474h2v1h-2zM1159 474h1v1h-1zM104 475h2v1h-2zM107 475h17v1h-17zM125 475h1v1h-1zM128 475h1v1h-1zM130 475h2v1h-2zM133 475h1v1h-1zM135 475h14v1h-14zM150 475h4v1h-4zM155 475h1v1h-1zM157 475h27v1h-27zM185 475h1v1h-1zM187 475h2v1h-2zM191 475h1v1h-1zM194 475h1v1h-1zM196 475h14v1h-14zM211 475h8v1h-8zM220 475h1v1h-1zM222 475h2v1h-2zM225 475h8v1h-8zM234 475h1v1h-1zM239 475h1v1h-1zM241 475h2v1h-2zM244 475h27v1h-27zM272 475h14v1h-14zM287 475h1v1h-1zM289 475h2v1h-2zM292 475h17v1h-17zM310 475h4v1h-4zM315 475h10v1h-10zM326 475h1v1h-1zM329 475h1v1h-1zM331 475h2v1h-2zM334 475h2v1h-2zM337 475h1v1h-1zM339 475h2v1h-2zM342 475h1v1h-1zM344 475h23v1h-23zM368 475h3v1h-3zM372 475h4v1h-4zM377 475h3v1h-3zM381 475h13v1h-13zM395 475h22v1h-22zM418 475h33v1h-33zM452 475h2v1h-2zM455 475h6v1h-6zM105 476h3v1h-3zM110 476h2v1h-2zM114 476h1v1h-1zM117 476h2v1h-2zM120 476h3v1h-3zM125 476h3v1h-3zM130 476h2v1h-2zM133 476h1v1h-1zM136 476h6v1h-6zM144 476h2v1h-2zM148 476h3v1h-3zM153 476h3v1h-3zM158 476h3v1h-3zM165 476h3v1h-3zM172 476h1v1h-1zM176 476h2v1h-2zM182 476h3v1h-3zM187 476h2v1h-2zM191 476h1v1h-1zM194 476h1v1h-1zM196 476h1v1h-1zM200 476h2v1h-2zM203 476h3v1h-3zM209 476h3v1h-3zM216 476h3v1h-3zM221 476h2v1h-2zM225 476h3v1h-3zM231 476h4v1h-4zM237 476h1v1h-1zM239 476h1v1h-1zM242 476h3v1h-3zM248 476h2v1h-2zM254 476h4v1h-4zM260 476h3v1h-3zM266 476h2v1h-2zM270 476h3v1h-3zM275 476h2v1h-2zM279 476h2v1h-2zM285 476h3v1h-3zM290 476h3v1h-3zM295 476h2v1h-2zM300 476h2v1h-2zM304 476h2v1h-2zM309 476h2v1h-2zM313 476h3v1h-3zM319 476h2v1h-2zM322 476h2v1h-2zM326 476h4v1h-4zM332 476h3v1h-3zM338 476h2v1h-2zM342 476h4v1h-4zM347 476h2v1h-2zM351 476h4v1h-4zM359 476h1v1h-1zM362 476h2v1h-2zM366 476h3v1h-3zM370 476h3v1h-3zM375 476h4v1h-4zM381 476h4v1h-4zM391 476h2v1h-2zM396 476h2v1h-2zM401 476h2v1h-2zM406 476h3v1h-3zM412 476h1v1h-1zM417 476h1v1h-1zM422 476h1v1h-1zM426 476h3v1h-3zM434 476h2v1h-2zM439 476h1v1h-1zM441 476h3v1h-3zM446 476h2v1h-2zM451 476h2v1h-2zM456 476h2v1h-2zM475 476h2v1h-2zM480 476h2v1h-2zM488 476h1v1h-1zM490 476h2v1h-2zM496 476h1v1h-1zM500 476h1v1h-1zM502 476h1v1h-1zM508 476h2v1h-2zM513 476h1v1h-1zM520 476h1v1h-1zM522 476h1v1h-1zM526 476h1v1h-1zM529 476h1v1h-1zM534 476h1v1h-1zM539 476h1v1h-1zM544 476h2v1h-2zM552 476h1v1h-1zM561 476h1v1h-1zM564 476h1v1h-1zM577 476h1v1h-1zM579 476h1v1h-1zM584 476h1v1h-1zM590 476h1v1h-1zM596 476h1v1h-1zM603 476h2v1h-2zM608 476h1v1h-1zM615 476h1v1h-1zM622 476h1v1h-1zM624 476h1v1h-1zM635 476h1v1h-1zM637 476h1v1h-1zM643 476h1v1h-1zM648 476h1v1h-1zM654 476h1v1h-1zM656 476h1v1h-1zM661 476h1v1h-1zM680 476h1v1h-1zM686 476h1v1h-1zM691 476h1v1h-1zM696 476h2v1h-2zM701 476h2v1h-2zM709 476h1v1h-1zM726 476h1v1h-1zM729 476h1v1h-1zM734 476h1v1h-1zM740 476h2v1h-2zM746 476h1v1h-1zM752 476h1v1h-1zM758 476h2v1h-2zM764 476h1v1h-1zM766 476h1v1h-1zM768 476h1v1h-1zM782 476h1v1h-1zM787 476h2v1h-2zM803 476h1v1h-1zM809 476h1v1h-1zM813 476h1v1h-1zM818 476h1v1h-1zM824 476h1v1h-1zM836 476h1v1h-1zM841 476h1v1h-1zM847 476h2v1h-2zM853 476h1v1h-1zM861 476h1v1h-1zM869 476h1v1h-1zM874 476h1v1h-1zM885 476h2v1h-2zM891 476h1v1h-1zM899 476h1v1h-1zM911 476h1v1h-1zM942 476h1v1h-1zM951 476h1v1h-1zM957 476h1v1h-1zM965 476h1v1h-1zM973 476h1v1h-1zM976 476h1v1h-1zM981 476h1v1h-1zM985 476h1v1h-1zM993 476h1v1h-1zM1002 476h1v1h-1zM1005 476h2v1h-2zM1009 476h1v1h-1zM1014 476h1v1h-1zM1024 476h1v1h-1zM1034 476h2v1h-2zM1039 476h1v1h-1zM1044 476h1v1h-1zM1057 476h1v1h-1zM1062 476h1v1h-1zM1077 476h1v1h-1zM1082 476h1v1h-1zM1090 476h1v1h-1zM1093 476h1v1h-1zM1102 476h1v1h-1zM1107 476h2v1h-2zM1110 476h1v1h-1zM1115 476h1v1h-1zM1119 476h2v1h-2zM1124 476h1v1h-1zM1129 476h1v1h-1zM1132 476h1v1h-1zM1137 476h1v1h-1zM1145 476h2v1h-2zM1154 476h1v1h-1zM1157 476h1v1h-1zM1162 476h1v1h-1zM1169 476h2v1h-2zM1173 476h1v1h-1zM1177 476h1v1h-1zM1182 476h2v1h-2zM1193 476h2v1h-2zM105 477h3v1h-3zM111 477h1v1h-1zM121 477h2v1h-2zM125 477h3v1h-3zM131 477h1v1h-1zM133 477h1v1h-1zM149 477h1v1h-1zM153 477h2v1h-2zM166 477h1v1h-1zM177 477h1v1h-1zM183 477h2v1h-2zM188 477h4v1h-4zM194 477h3v1h-3zM205 477h1v1h-1zM210 477h1v1h-1zM216 477h2v1h-2zM221 477h2v1h-2zM225 477h2v1h-2zM232 477h2v1h-2zM237 477h1v1h-1zM239 477h1v1h-1zM242 477h3v1h-3zM248 477h2v1h-2zM260 477h2v1h-2zM271 477h1v1h-1zM286 477h2v1h-2zM290 477h2v1h-2zM305 477h1v1h-1zM309 477h1v1h-1zM322 477h1v1h-1zM327 477h2v1h-2zM338 477h2v1h-2zM343 477h2v1h-2zM359 477h1v1h-1zM366 477h2v1h-2zM371 477h2v1h-2zM376 477h2v1h-2zM382 477h2v1h-2zM392 477h1v1h-1zM396 477h2v1h-2zM406 477h2v1h-2zM417 477h1v1h-1zM451 477h2v1h-2zM456 477h1v1h-1zM508 477h2v1h-2zM529 477h1v1h-1zM579 477h1v1h-1zM622 477h1v1h-1zM656 477h1v1h-1zM106 478h1v1h-1zM126 478h2v1h-2zM131 478h3v1h-3zM154 478h1v1h-1zM189 478h2v1h-2zM195 478h1v1h-1zM217 478h1v1h-1zM221 478h2v1h-2zM232 478h2v1h-2zM237 478h3v1h-3zM261 478h1v1h-1zM271 478h1v1h-1zM286 478h1v1h-1zM291 478h1v1h-1zM338 478h2v1h-2zM456 478h1v1h-1zM127 479h1v1h-1zM132 479h1v1h-1zM233 479h1v1h-1zM237 479h2v1h-2zM237 480h1v1h-1zM54 497h1v1h-1zM58 497h1v1h-1zM78 497h1v1h-1zM92 497h1v1h-1zM108 497h2v1h-2zM141 497h2v1h-2zM173 497h1v1h-1zM202 497h1v1h-1zM224 497h1v1h-1zM277 497h2v1h-2zM281 497h2v1h-2zM302 497h1v1h-1zM316 497h1v1h-1zM387 497h1v1h-1zM395 497h2v1h-2zM405 497h1v1h-1zM434 497h2v1h-2zM469 497h1v1h-1zM513 497h1v1h-1zM559 497h1v1h-1zM578 497h1v1h-1zM634 497h1v1h-1zM654 497h1v1h-1zM656 497h1v1h-1zM690 497h1v1h-1zM843 497h2v1h-2zM903 497h1v1h-1zM935 497h1v1h-1zM966 497h1v1h-1zM988 497h1v1h-1zM1152 497h1v1h-1zM1195 497h1v1h-1zM43 499h1v1h-1zM51 499h1v1h-1zM56 499h1v1h-1zM60 499h1v1h-1zM67 499h1v1h-1zM75 499h1v1h-1zM81 499h1v1h-1zM90 499h1v1h-1zM99 499h1v1h-1zM120 499h1v1h-1zM136 499h1v1h-1zM144 499h1v1h-1zM157 499h1v1h-1zM161 499h2v1h-2zM164 499h1v1h-1zM179 499h2v1h-2zM208 499h1v1h-1zM211 499h1v1h-1zM242 499h1v1h-1zM247 499h1v1h-1zM258 499h1v1h-1zM264 499h1v1h-1zM281 499h1v1h-1zM286 499h1v1h-1zM300 499h1v1h-1zM305 499h1v1h-1zM312 499h1v1h-1zM320 499h1v1h-1zM335 499h1v1h-1zM352 499h1v1h-1zM354 499h1v1h-1zM369 499h1v1h-1zM384 499h2v1h-2zM416 499h1v1h-1zM431 499h1v1h-1zM443 499h2v1h-2zM446 499h1v1h-1zM461 499h1v1h-1zM469 499h1v1h-1zM493 499h2v1h-2zM510 499h1v1h-1zM528 499h2v1h-2zM569 499h1v1h-1zM581 499h2v1h-2zM586 499h1v1h-1zM600 499h1v1h-1zM625 499h1v1h-1zM645 499h1v1h-1zM654 499h1v1h-1zM656 499h1v1h-1zM685 499h1v1h-1zM688 499h1v1h-1zM700 499h1v1h-1zM705 499h1v1h-1zM710 499h1v1h-1zM716 499h2v1h-2zM759 499h1v1h-1zM762 499h1v1h-1zM776 499h1v1h-1zM781 499h1v1h-1zM843 499h1v1h-1zM858 499h1v1h-1zM899 499h1v1h-1zM904 499h1v1h-1zM929 499h2v1h-2zM935 499h1v1h-1zM966 499h1v1h-1zM969 499h1v1h-1zM986 499h1v1h-1zM991 499h1v1h-1zM993 499h1v1h-1zM996 499h1v1h-1zM1060 499h2v1h-2zM1066 499h1v1h-1zM1072 499h1v1h-1zM1077 499h1v1h-1zM1114 499h2v1h-2zM1130 499h1v1h-1zM1132 499h1v1h-1zM1168 499h2v1h-2zM1186 499h1v1h-1zM1194 499h1v1h-1zM125 521h2v1h-2zM358 521h1v1h-1zM418 521h2v1h-2zM500 521h2v1h-2zM524 521h1v1h-1zM596 521h2v1h-2zM604 521h1v1h-1zM637 521h1v1h-1zM706 521h2v1h-2zM54 523h1v1h-1zM81 523h2v1h-2zM100 523h1v1h-1zM125 523h1v1h-1zM158 523h1v1h-1zM176 523h2v1h-2zM216 523h1v1h-1zM226 523h1v1h-1zM232 523h1v1h-1zM250 523h1v1h-1zM266 523h2v1h-2zM286 523h1v1h-1zM310 523h1v1h-1zM324 523h1v1h-1zM341 523h1v1h-1zM350 523h2v1h-2zM360 523h1v1h-1zM362 523h1v1h-1zM364 523h1v1h-1zM411 523h1v1h-1zM418 523h1v1h-1zM422 523h1v1h-1zM468 523h2v1h-2zM478 523h1v1h-1zM500 523h1v1h-1zM550 523h1v1h-1zM596 523h1v1h-1zM604 523h1v1h-1zM630 523h1v1h-1zM638 523h1v1h-1zM650 523h1v1h-1zM676 523h1v1h-1zM706 523h1v1h-1zM750 523h1v1h-1zM768 523h1v1h-1zM776 523h1v1h-1zM820 523h2v1h-2zM868 523h1v1h-1zM898 523h1v1h-1zM922 523h1v1h-1zM947 523h1v1h-1zM953 523h1v1h-1zM956 523h1v1h-1zM974 523h2v1h-2zM1026 523h1v1h-1zM1029 523h1v1h-1zM1034 523h1v1h-1zM1044 523h1v1h-1zM1051 523h1v1h-1zM1086 523h1v1h-1zM1097 523h1v1h-1zM1123 523h1v1h-1zM205 544h2v1h-2zM307 544h2v1h-2zM479 544h2v1h-2zM806 544h2v1h-2zM817 544h1v1h-1zM882 544h2v1h-2zM898 544h1v1h-1zM913 544h1v1h-1zM92 546h1v1h-1zM162 546h1v1h-1zM164 546h1v1h-1zM194 546h1v1h-1zM205 546h1v1h-1zM222 546h1v1h-1zM295 546h1v1h-1zM297 546h1v1h-1zM307 546h1v1h-1zM439 546h1v1h-1zM450 546h1v1h-1zM452 546h1v1h-1zM479 546h1v1h-1zM510 546h1v1h-1zM548 546h1v1h-1zM647 546h1v1h-1zM649 546h1v1h-1zM702 546h1v1h-1zM750 546h1v1h-1zM762 546h1v1h-1zM787 546h1v1h-1zM790 546h1v1h-1zM806 546h1v1h-1zM817 546h1v1h-1zM882 546h1v1h-1zM898 546h1v1h-1zM913 546h1v1h-1zM916 546h1v1h-1zM923 546h1v1h-1zM925 546h1v1h-1zM968 546h2v1h-2zM997 546h1v1h-1zM1064 546h1v1h-1zM1159 546h2v1h-2z"/>
<g style="filter:brightness(1)">
<text x="7.3" y="39" style="letter-spacing:0.2px">01:00</text>
<text x="7.3" y="62" style="letter-spacing:0.2px">02:00</text>
<text x="7.3" y="85" style="letter-spacing:0.2px">03:00</text>
<text x="7.3" y="109" style="letter-spacing:0.2px">04:00</text>
<text x="7.3" y="132" style="letter-spacing:0.2px">05:00</text>
<text x="7.3" y="155" style="letter-spacing:0.2px">06:00</text>
<text x="7.3" y="178" style="letter-spacing:0.2px">07:00</text>
<text x="7.3" y="201" style="letter-spacing:0.2px">08:00</text>
<text x="7.3" y="224" style="letter-spacing:0.2px">09:00</text>
<text x="7.3" y="248" style="letter-spacing:0.2px">10:00</text>
<text x="7.3" y="271" style="letter-spacing:0.2px">11:00</text>
<text x="7.3" y="294" style="letter-spacing:0.2px">12:00</text>
<text x="7.3" y="317" style="letter-spacing:0.2px">13:00</text>
<text x="7.3" y="340" style="letter-spacing:0.2px">14:00</text>
<text x="7.3" y="363" style="letter-spacing:0.2px">15:00</text>
<text x="7.3" y="387" style="letter-spacing:0.2px">16:00</text>
<text x="7.3" y="410" style="letter-spacing:0.2px">17:00</text>
<text x="7.3" y="433" style="letter-spacing:0.2px">18:00</text>
<text x="7.3" y="456" style="letter-spacing:0.2px">19:00</text>
<text x="7.3" y="479" style="letter-spacing:0.2px">20:00</text>
<text x="7.3" y="502" style="letter-spacing:0.2px">21:00</text>
<text x="7.3" y="526" style="letter-spacing:0.2px">22:00</text>
<text x="7.3" y="549" style="letter-spacing:0.2px">23:00</text>
<text x="7.3" y="572" style="letter-spacing:0.2px">00:00</text>
<text x="138.5" y="593" text-anchor="middle" style="letter-spacing:0.2px">:05</text>
<text x="234.5" y="593" text-anchor="middle" style="letter-spacing:0.2px">:10</text>
<text x="331.5" y="593" text-anchor="middle" style="letter-spacing:0.2px">:15</text>
<text x="427.5" y="593" text-anchor="middle" style="letter-spacing:0.2px">:20</text>
<text x="523.5" y="593" text-anchor="middle" style="letter-spacing:0.2px">:25</text>
<text x="620.5" y="593" text-anchor="middle" style="letter-spacing:0.2px">:30</text>
<text x="716.5" y="593" text-anchor="middle" style="letter-spacing:0.2px">:35</text>
<text x="812.5" y="593" text-anchor="middle" style="letter-spacing:0.2px">:40</text>
<text x="908.5" y="593" text-anchor="middle" style="letter-spacing:0.2px">:45</text>
<text x="1004.5" y="593" text-anchor="middle" style="letter-spacing:0.2px">:50</text>
<text x="1101.5" y="593" text-anchor="middle" style="letter-spacing:0.2px">:55</text>
<text x="40.3" y="14" style="letter-spacing:0.292px">SeiPi1CEscola</text>
<text x="126.5" y="14" style="letter-spacing:0.100px">Ferreira</text>
<text x="173.2" y="14" style="letter-spacing:0.267px">Dias</text>
<text x="201.5" y="14" style="letter-spacing:0.200px">(PEFD):</text>
<text x="254.2" y="14" style="letter-spacing:-0.167px">Agualva</text>
<text x="299.8" y="14" style="letter-spacing:0.200px">(38.77,</text>
<text x="341.2" y="14" style="letter-spacing:0.167px">-9.299)</text>
<text x="409.6" y="14" style="letter-spacing:0.108px">Magnification:</text>
<text x="487.7" y="14" style="letter-spacing:0.000px">6</text>
<text x="509.6" y="14" style="letter-spacing:0.133px">Offset:</text>
<text x="548.6" y="14" style="letter-spacing:0.000px">0</text>
<text x="569.6" y="14" style="letter-spacing:0.000px">Filter:</text>
<text x="602.6" y="14" style="letter-spacing:0.600px">None</text>
<text class="date" x="42" y="571" style="letter-spacing:-0.11px">Fri Sep 19, 2025</text>
<rect x="1040" y="600" width="72" height="32" fill="#fff"/>
<text class="sta" x="1044" y="625">PEFD</text>
</g>
<defs><linearGradient id="lg" gradientUnits="userSpaceOnUse" x1="1151" y1="601" x2="1176" y2="624"><stop offset="0" stop-color="#2626b4"/><stop offset="0.5" stop-color="#86267c"/><stop offset="1" stop-color="#f01818"/></linearGradient><clipPath id="lc"><circle cx="1163.9" cy="611.8" r="15.9"/></clipPath></defs>
<g fill="none" stroke="#94949c" stroke-width="1"><circle cx="1155" cy="620.9" r="22.8"/><circle cx="1155" cy="620.9" r="18.8"/><circle cx="1155" cy="620.9" r="14.8"/><circle cx="1155" cy="620.9" r="10.8"/><circle cx="1155" cy="620.9" r="6.8"/></g>
<circle cx="1163.9" cy="611.8" r="15.9" fill="#cacaca"/>
<g fill="none" stroke="url(#lg)" stroke-width="1.3" clip-path="url(#lc)"><circle cx="1155" cy="620.9" r="2.4"/><circle cx="1155" cy="620.9" r="6.5"/><circle cx="1155" cy="620.9" r="10.4"/><circle cx="1155" cy="620.9" r="14.3"/><circle cx="1155" cy="620.9" r="18.2"/><circle cx="1155" cy="620.9" r="22.1"/><circle cx="1155" cy="620.9" r="26"/></g>
<circle cx="1163.9" cy="611.8" r="15.5" fill="none" stroke="url(#lg)" stroke-width="1.3"/>

</svg></body></html>
